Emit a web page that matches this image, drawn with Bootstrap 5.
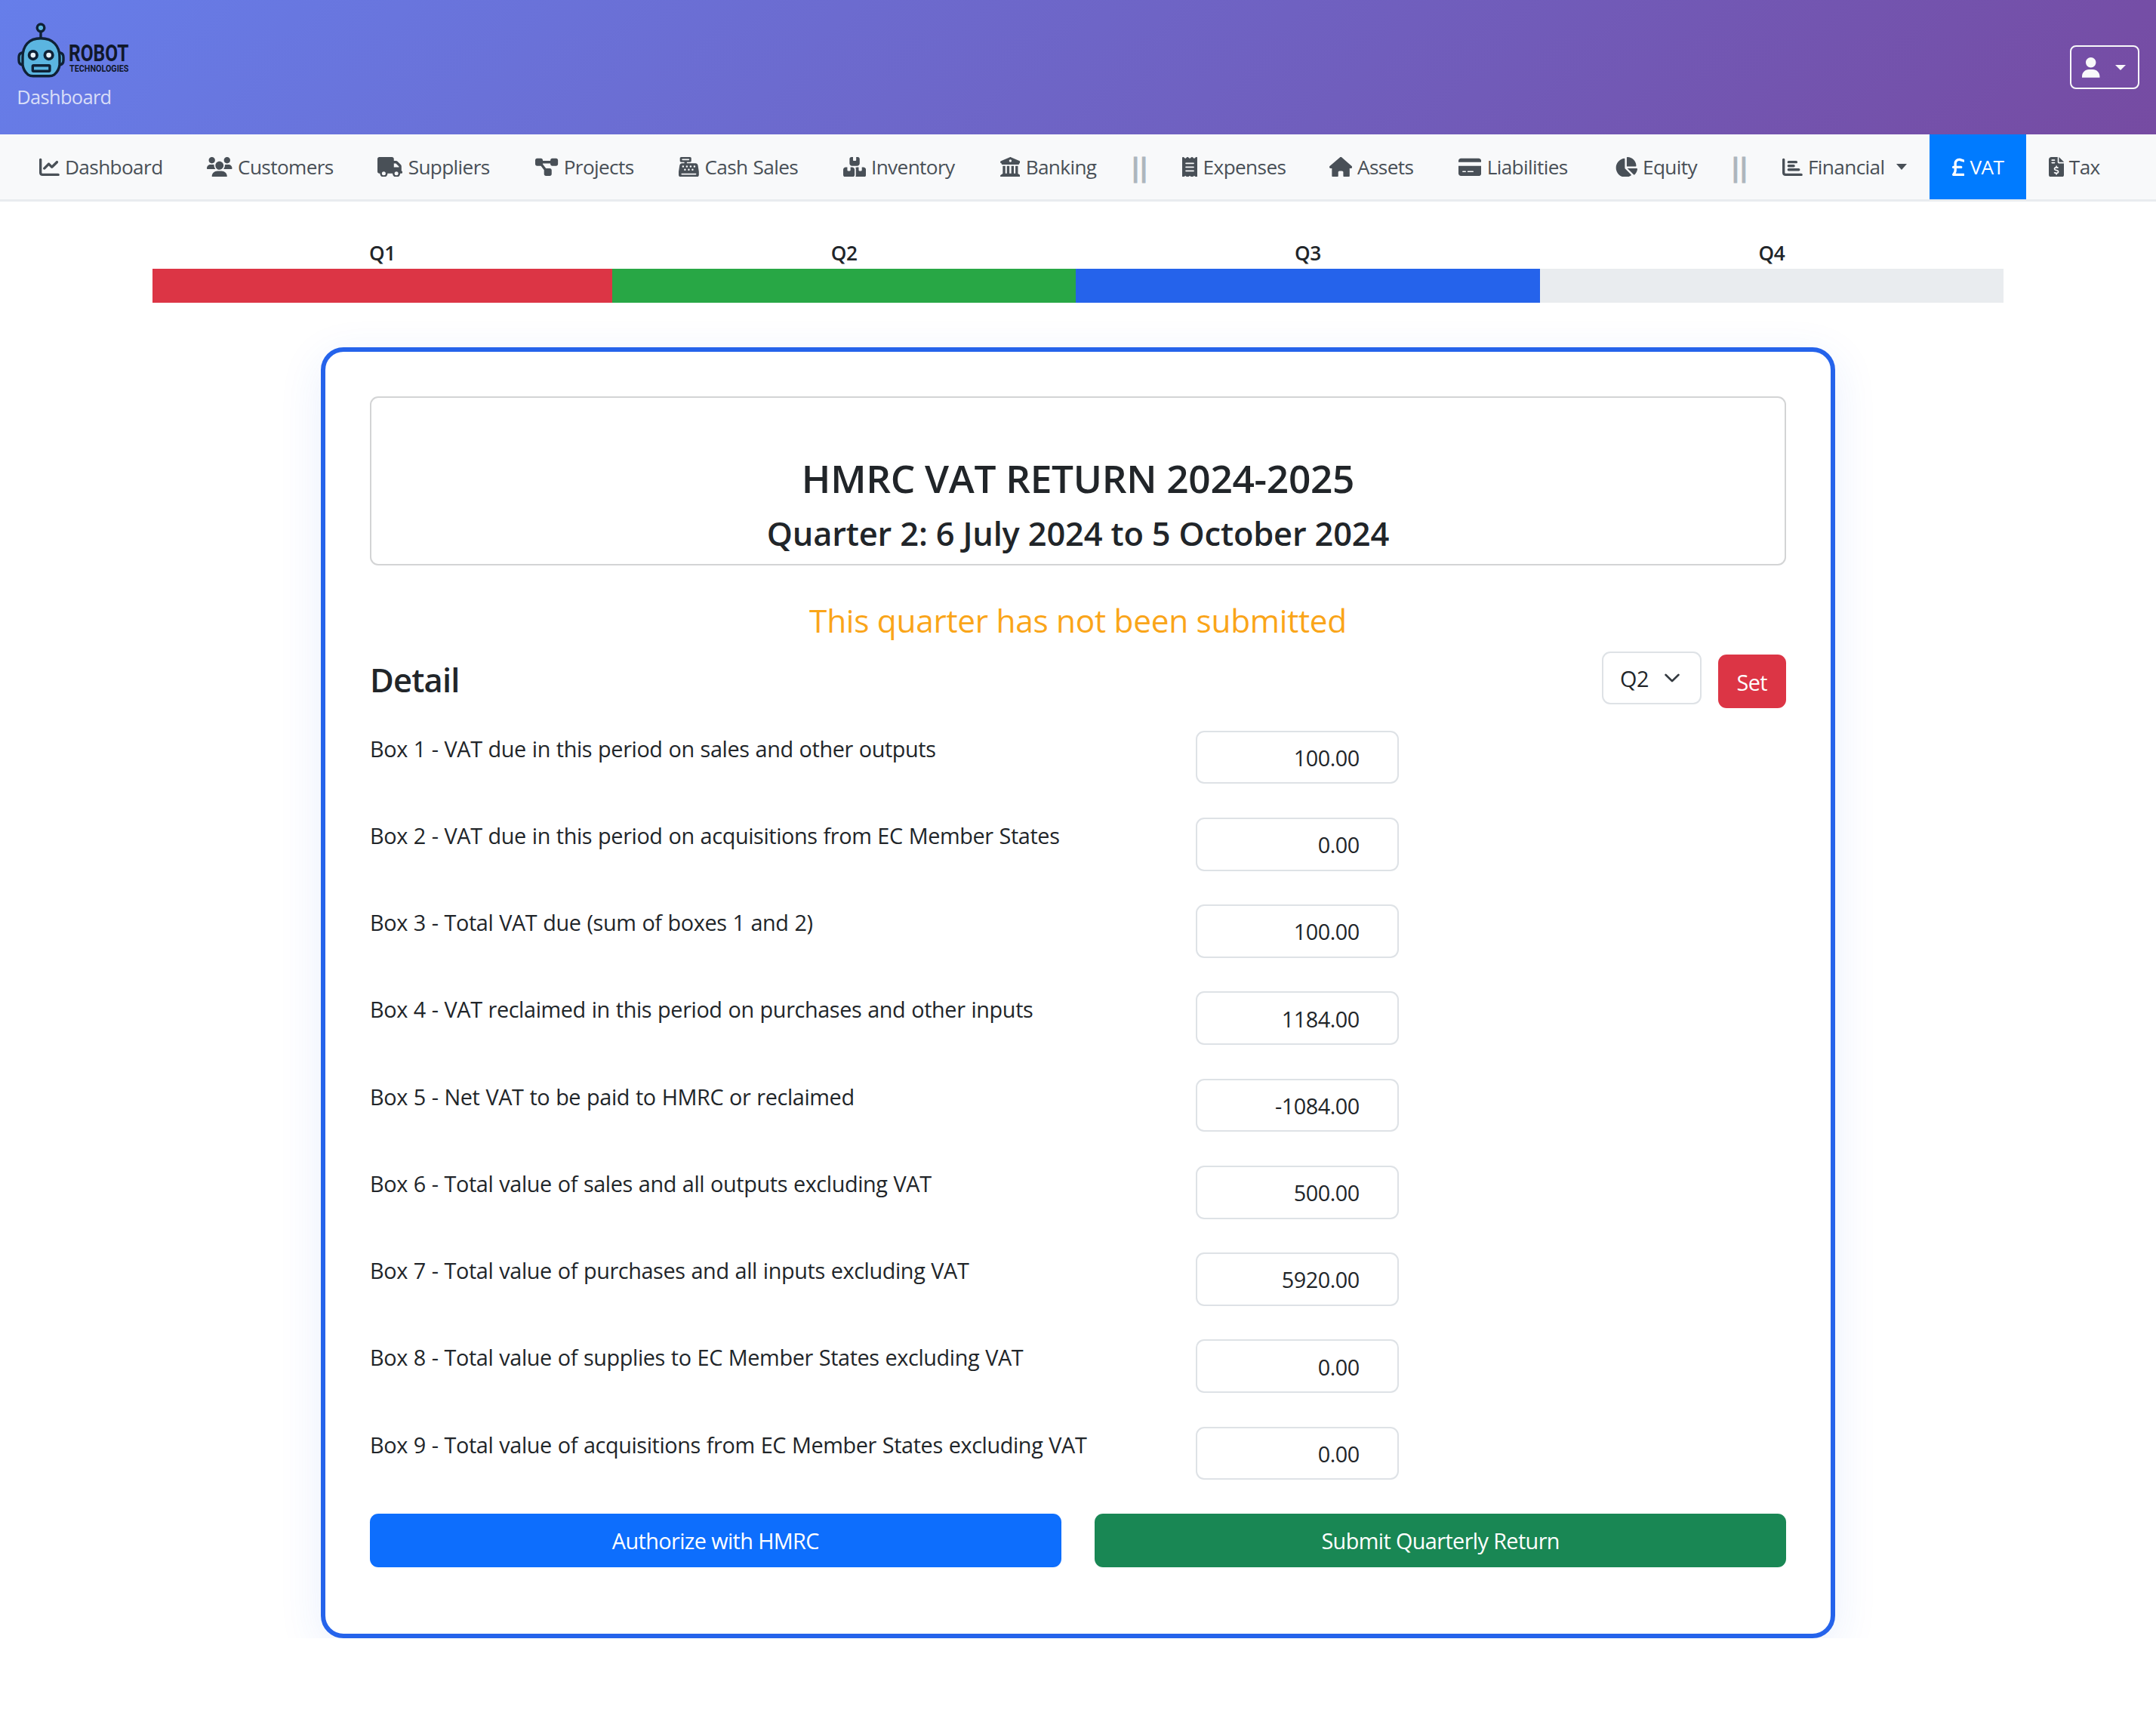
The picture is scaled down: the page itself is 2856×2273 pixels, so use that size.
<!DOCTYPE html>
<html lang="en">
<head>
<meta charset="utf-8">
<title>VAT Return - Robot Technologies</title>
<link rel="stylesheet" href="https://cdn.jsdelivr.net/npm/bootstrap@5.3.0/dist/css/bootstrap.min.css">
<style>
  html { font-size: 29.75px; }
  body { font-family: "Open Sans", "Noto Sans", sans-serif; font-size: 28.8px; letter-spacing: -.38px; word-spacing: .8px; line-height: 44.6px; background: #fff; color: #212529; }

  /* Header */
  .site-header { height: 178.4px; padding: 0 .75rem; background: linear-gradient(135deg, #667eea 0%, #764ba2 100%); }
  .brand-block { padding-bottom: 3px; }
  .brand-logo { display: block; width: 170px; height: 76px; margin-bottom: 5px; }
  .brand-page { font-size: 25.4px; letter-spacing: -.65px; line-height: 36px; color: rgba(255,255,255,.75); }
  .user-btn { width: 92px; height: 58px; padding: 0 16px 0 14.5px; border: 2px solid #f8f9fa; border-radius: 8px; color: #f8f9fa; }
  .user-btn::after { margin: 0; border-width: 7.5px 7.5px 0; }

  /* Navigation */
  .main-nav { height: 88.4px; padding: 0 22.3px; background: #f8f9fa; border-bottom: 3.7px solid #e9ecef; flex-wrap: nowrap; }
  .main-nav .nav-link { display: flex; align-items: center; flex: none; height: 100%; padding: 0 0 0 29.7px; color: #495057; font-size: 26.2px; letter-spacing: -.62px; line-height: 40px; border-radius: 0; white-space: nowrap; }
  .main-nav .nav-link.active { background: #007bff; color: #fff; }
  .main-nav .dropdown-toggle::after { margin-left: 15px; border-width: 8px 7.5px 0; }
  .ico { flex: none; height: 26.8px; margin-right: 7.2px; fill: currentColor; }
  .nav-split { flex: none; text-align: center; font-weight: 700; font-size: 34px; letter-spacing: -7.8px; text-indent: -8px; color: #adb5bd; -webkit-text-stroke: .9px #adb5bd; }
  .w-dash { width: 222.4px; } .w-cust { width: 225.6px; } .w-supp { width: 209.4px; } .w-proj { width: 190.1px; }
  .w-cash { width: 217.2px; } .w-inv { width: 208px; } .w-bank { width: 188px; } .w-split { width: 53.7px; }
  .w-exp { width: 194.4px; } .w-asset { width: 171.6px; } .w-liab { width: 206.4px; } .w-eq { width: 168.6px; }
  .w-fin { width: 224.6px; } .w-vat { width: 128px; } .w-tax { width: 130px; }

  /* Quarter timeline */
  .timeline { width: 2452px; margin: 47.5px auto 0; }
  .quarter-col { flex: 92 1 0; }
  .quarter-col:first-child { flex-grow: 91.2; }
  .quarter-name { padding-top: 1px; font-size: 26.2px; font-weight: 600; line-height: 40.7px; text-align: center; }
  .quarter-bar { height: 44.6px; }
  .bar-red { background: #dc3545; } .bar-green { background: #28a745; } .bar-blue { background: #2563eb; } .bar-none { background: #e9ecef; }

  /* VAT return card */
  .vat-card { width: 2006px; margin: 59.7px auto 0; padding: 59px 59px 88.6px; border: 6px solid #2563eb; border-radius: 30px; background: #fff; box-shadow: 0 15px 59px rgba(37,99,235,.1); }
  .title-box { height: 223.7px; padding-top: 75px; border: 2px solid #d3d4d5; border-radius: 11px; }
  .title-box h2 { margin: 0 0 15.6px; font-size: 51.4px; font-weight: 600; line-height: 62px; letter-spacing: -.3px; }
  .title-box h3, .detail-title { margin: 0; font-size: 43.4px; font-weight: 600; line-height: 53.5px; letter-spacing: -.17px; }
  .title-box h2, .title-box h3 { word-spacing: 0; }
  .vat-card .detail-title { padding-top: 1px; letter-spacing: -.8px; }
  .quarter-state { margin-top: 46.3px; font-size: 42.4px; line-height: 53.5px; letter-spacing: -.3px; word-spacing: 0; color: #faa519; }
  .detail-bar { margin: 13.9px 0 29.7px; height: 75.3px; }
  .quarter-select { width: 132.4px; height: 70.7px; border: 2px solid #dee2e6; padding: 1px 0 0 22.5px; font-size: 28.8px; letter-spacing: -.4px; line-height: 66px; background-size: 1rem .75rem; }
  .vat-row { height: 70.7px; margin-bottom: 44.57px; }
  .vat-row label { padding-top: 2px; }
  .vat-row .form-control { width: 268.4px; height: 70.7px; padding: 1px 50px 0 20px; border: 2px solid #dee2e6; font-size: 28.8px; letter-spacing: -.5px; text-align: right; }
  .vat-card .btn { height: 70.7px; padding: 0; border: 0; font-size: 28.8px; letter-spacing: -.6px; line-height: 72.4px; }
  .vat-card .set-btn { width: 90.5px; margin-left: 21.6px; line-height: 73px; }
</style>
</head>
<body>
<header class="site-header d-flex align-items-center justify-content-between">
  <div class="brand-block">
    <svg class="brand-logo" viewBox="22 29.2 170 76">
      <g fill="#5bb5e0" stroke="#0f2136" stroke-width="3.4" stroke-linejoin="round">
        <path d="M54 42v10" fill="none"/>
        <circle cx="54" cy="37" r="4.8"/>
        <path d="M31 70h-2q-4 1-4 6v4q0 5 4 6h3z"/>
        <path d="M78 70h2q4 1 4 6v4q0 5-4 6h-3z"/>
        <path d="M54 51C38 51 30 61 30 76v10q1 8 7 13 3 2 7 2h21q4 0 7-2 6-5 7-13V76C79 61 70 51 54 51z"/>
        <circle cx="43.8" cy="73.3" r="5.2" fill="#eaf3fb" stroke-width="3.8"/>
        <circle cx="64.6" cy="73.3" r="5.2" fill="#eaf3fb" stroke-width="3.8"/>
        <rect x="43.3" y="87" width="22.6" height="7.4" rx="1"/>
      </g>
      <g fill="#10182b" font-family="Roboto, sans-serif" font-weight="700" letter-spacing="0">
        <text x="91" y="81" font-size="32" textLength="79.5" lengthAdjust="spacingAndGlyphs">ROBOT</text>
        <text x="92" y="95.6" font-size="13.2" textLength="78.5" lengthAdjust="spacingAndGlyphs">TECHNOLOGIES</text>
      </g>
    </svg>
    <div class="brand-page">Dashboard</div>
  </div>
  <button class="user-btn bg-transparent dropdown-toggle d-flex align-items-center justify-content-between" type="button" aria-label="Account">
    <svg class="ico m-0" viewBox="0 0 448 512"><path d="M224 256c70.7 0 128-57.31 128-128s-57.3-128-128-128C153.3 0 96 57.31 96 128S153.3 256 224 256zM274.7 304H173.3C77.61 304 0 381.6 0 477.3V512H448V477.3C448 381.6 370.4 304 274.7 304z"/></svg>
  </button>
</header>

<nav class="main-nav nav align-items-center">
  <a class="nav-link w-dash" href="#"><svg class="ico" viewBox="0 0 512 512"><path d="M64 64c0-17.7-14.3-32-32-32S0 46.3 0 64V400c0 44.2 35.8 80 80 80H480c17.7 0 32-14.3 32-32s-14.3-32-32-32H80c-8.8 0-16-7.2-16-16V64zm406.6 86.6c12.5-12.5 12.5-32.8 0-45.3s-32.8-12.5-45.3 0L320 210.7l-57.4-57.4c-12.5-12.5-32.8-12.5-45.3 0l-112 112c-12.5 12.5-12.5 32.8 0 45.3s32.8 12.5 45.3 0L240 221.3l57.4 57.4c12.5 12.5 32.8 12.5 45.3 0l128-128z"/></svg>Dashboard</a>
  <a class="nav-link w-cust" href="#"><svg class="ico" viewBox="0 0 640 512"><path d="M319.9 320c57.41 0 103.1-46.56 103.1-104c0-57.44-46.54-104-103.1-104c-57.41 0-103.1 46.56-103.1 104C215.9 273.4 262.5 320 319.9 320zM369.9 352H270.1C191.6 352 128 411.7 128 485.3C128 500.1 140.7 512 156.4 512h327.2C499.3 512 512 500.1 512 485.3C512 411.7 448.4 352 369.9 352zM512 160c44.18 0 80-35.82 80-80S556.2 0 512 0c-44.18 0-80 35.82-80 80S467.8 160 512 160zM183.9 216c0-5.449 .9824-10.63 1.609-15.91C174.6 194.1 162.6 192 149.9 192H88.08C39.44 192 0 233.8 0 285.3C0 295.6 7.887 304 17.62 304h199.5C196.7 280.2 183.9 249.7 183.9 216zM128 160c44.18 0 80-35.82 80-80S172.2 0 128 0C83.82 0 48 35.82 48 80S83.82 160 128 160zM551.9 192h-61.84c-12.8 0-24.88 3.037-35.86 8.24C454.8 205.5 455.8 210.6 455.8 216c0 33.71-12.78 64.21-33.16 88h199.7C632.1 304 640 295.6 640 285.3C640 233.8 600.6 192 551.9 192z"/></svg>Customers</a>
  <a class="nav-link w-supp" href="#"><svg class="ico" viewBox="0 0 640 512"><path d="M48 0C21.5 0 0 21.5 0 48V368c0 26.5 21.5 48 48 48H64c0 53 43 96 96 96s96-43 96-96H384c0 53 43 96 96 96s96-43 96-96h32c17.7 0 32-14.3 32-32s-14.3-32-32-32V288 256 237.3c0-17-6.7-33.3-18.7-45.3L512 114.7c-12-12-28.3-18.7-45.3-18.7H416V48c0-26.5-21.5-48-48-48H48zM416 160h50.7L544 237.3V256H416V160zM112 416a48 48 0 1 1 96 0 48 48 0 1 1 -96 0zm368-48a48 48 0 1 1 0 96 48 48 0 1 1 0-96z"/></svg>Suppliers</a>
  <a class="nav-link w-proj" href="#"><svg class="ico" viewBox="0 0 576 512"><path d="M0 80C0 53.5 21.5 32 48 32h96c26.5 0 48 21.5 48 48V96H384V80c0-26.5 21.5-48 48-48h96c26.5 0 48 21.5 48 48v96c0 26.5-21.5 48-48 48H432c-26.5 0-48-21.5-48-48V160H192v16c0 1.7-.1 3.4-.3 5L272 288h96c26.5 0 48 21.5 48 48v96c0 26.5-21.5 48-48 48H272c-26.5 0-48-21.5-48-48V336c0-1.7 .1-3.4 .3-5L144 224H48c-26.5 0-48-21.5-48-48V80z"/></svg>Projects</a>
  <a class="nav-link w-cash" href="#"><svg class="ico" viewBox="0 0 512 512"><path d="M64 0C46.3 0 32 14.3 32 32V96c0 17.7 14.3 32 32 32h80v32H87c-31.6 0-58.5 23.1-63.3 54.4L1.1 364.1C.4 368.8 0 373.6 0 378.4V448c0 35.3 28.7 64 64 64H448c35.3 0 64-28.7 64-64V378.4c0-4.8-.4-9.6-1.1-14.4L488.2 214.4C483.5 183.1 456.6 160 425 160H208V128h80c17.7 0 32-14.3 32-32V32c0-17.7-14.3-32-32-32H64zM96 48H256c8.8 0 16 7.2 16 16s-7.2 16-16 16H96c-8.8 0-16-7.2-16-16s7.2-16 16-16zM64 432c0-8.8 7.2-16 16-16H432c8.8 0 16 7.2 16 16s-7.2 16-16 16H80c-8.8 0-16-7.2-16-16zm48-168a24 24 0 1 1 0-48 24 24 0 1 1 0 48zm120-24a24 24 0 1 1 -48 0 24 24 0 1 1 48 0zM160 344a24 24 0 1 1 0-48 24 24 0 1 1 0 48zM328 240a24 24 0 1 1 -48 0 24 24 0 1 1 48 0zM256 344a24 24 0 1 1 0-48 24 24 0 1 1 0 48zM424 240a24 24 0 1 1 -48 0 24 24 0 1 1 48 0zM352 344a24 24 0 1 1 0-48 24 24 0 1 1 0 48z"/></svg>Cash Sales</a>
  <a class="nav-link w-inv" href="#"><svg class="ico" viewBox="0 0 576 512"><path d="M248 0H208c-26.5 0-48 21.5-48 48V160c0 35.3 28.7 64 64 64H352c35.3 0 64-28.7 64-64V48c0-26.5-21.5-48-48-48H328V80c0 8.8-7.2 16-16 16H264c-8.8 0-16-7.2-16-16V0zM64 256c-35.3 0-64 28.7-64 64V448c0 35.3 28.7 64 64 64H224c35.3 0 64-28.7 64-64V320c0-35.3-28.7-64-64-64H184v80c0 8.8-7.2 16-16 16H120c-8.8 0-16-7.2-16-16V256H64zM352 512H512c35.3 0 64-28.7 64-64V320c0-35.3-28.7-64-64-64H472v80c0 8.8-7.2 16-16 16H408c-8.8 0-16-7.2-16-16V256H352c-15 0-28.8 5.1-39.7 13.8c4.9 10.4 7.7 22 7.7 34.2V464c0 12.2-2.8 23.8-7.7 34.2C323.2 506.9 337 512 352 512z"/></svg>Inventory</a>
  <a class="nav-link w-bank" href="#"><svg class="ico" viewBox="0 0 512 512"><path d="M243.4 2.6l-224 96c-14 6-21.8 21-18.7 35.8S16.8 160 32 160v8c0 13.3 10.7 24 24 24H456c13.3 0 24-10.7 24-24v-8c15.2 0 28.3-10.7 31.3-25.6s-4.8-29.9-18.7-35.8l-224-96c-8-3.4-17.2-3.4-25.2 0zM128 224H64V420.3c-.6 .3-1.2 .7-1.8 1.1l-48 32c-11.7 7.8-17 22.4-12.9 35.9S17.9 512 32 512H480c14.1 0 26.5-9.2 30.6-22.7s-1.1-28.1-12.9-35.9l-48-32c-.6-.4-1.2-.7-1.8-1.1V224H384V416H344V224H280V416H232V224H168V416H128V224zM256 64a32 32 0 1 1 0 64 32 32 0 1 1 0-64z"/></svg>Banking</a>
  <span class="nav-split w-split">||</span>
  <a class="nav-link w-exp" href="#"><svg class="ico" viewBox="0 0 384 512"><path d="M14 2.2C22.5-1.7 32.5-.3 39.6 5.8L80 40.4 120.4 5.8c9-7.7 22.3-7.7 31.2 0L192 40.4 232.4 5.8c9-7.7 22.3-7.7 31.2 0L304 40.4 344.4 5.8c7.1-6.1 17.1-7.5 25.6-3.6s14 12.4 14 21.8V488c0 9.4-5.5 17.9-14 21.8s-18.5 2.5-25.6-3.6L304 471.6l-40.4 34.6c-9 7.7-22.3 7.7-31.2 0L192 471.6l-40.4 34.6c-9 7.7-22.3 7.7-31.2 0L80 471.6 39.6 506.2c-7.1 6.1-17.1 7.5-25.6 3.6S0 497.4 0 488V24C0 14.6 5.5 6.1 14 2.2zM96 144c-8.8 0-16 7.2-16 16s7.2 16 16 16H288c8.8 0 16-7.2 16-16s-7.2-16-16-16H96zM80 352c0 8.8 7.2 16 16 16H288c8.8 0 16-7.2 16-16s-7.2-16-16-16H96c-8.8 0-16 7.2-16 16zM96 240c-8.8 0-16 7.2-16 16s7.2 16 16 16H288c8.8 0 16-7.2 16-16s-7.2-16-16-16H96z"/></svg>Expenses</a>
  <a class="nav-link w-asset" href="#"><svg class="ico" viewBox="0 0 576 512"><path d="M575.8 255.5c0 18-15 32.1-32 32.1h-32l.7 160.2c0 2.7-.2 5.4-.5 8.1V472c0 22.1-17.9 40-40 40H456c-1.1 0-2.2 0-3.3-.1c-1.4 .1-2.8 .1-4.2 .1H416 392c-22.1 0-40-17.9-40-40V448 384c0-17.7-14.3-32-32-32H256c-17.7 0-32 14.3-32 32v64 24c0 22.1-17.9 40-40 40H160 128.1c-1.5 0-3-.1-4.5-.2c-1.2 .1-2.4 .2-3.6 .2H104c-22.1 0-40-17.9-40-40V360c0-.9 0-1.9 .1-2.8V287.6H32c-18 0-32-14-32-32.1c0-9 3-17 10-24L266.4 8c7-7 15-8 22-8s15 2 21 7L564.8 231.5c8 7 12 15 11 24z"/></svg>Assets</a>
  <a class="nav-link w-liab" href="#"><svg class="ico" viewBox="0 0 576 512"><path d="M64 32C28.7 32 0 60.7 0 96v32H576V96c0-35.3-28.7-64-64-64H64zM576 224H0V416c0 35.3 28.7 64 64 64H512c35.3 0 64-28.7 64-64V224zM112 352h64c8.8 0 16 7.2 16 16s-7.2 16-16 16H112c-8.8 0-16-7.2-16-16s7.2-16 16-16zm112 16c0-8.8 7.2-16 16-16H368c8.8 0 16 7.2 16 16s-7.2 16-16 16H240c-8.8 0-16-7.2-16-16z"/></svg>Liabilities</a>
  <a class="nav-link w-eq" href="#"><svg class="ico" viewBox="0 0 576 512"><path d="M304 240V16.6c0-9 7-16.6 16-16.6C443.7 0 544 100.3 544 224c0 9-7.6 16-16.6 16H304zM32 272C32 150.7 122.1 50.3 239 34.3c9.2-1.3 17 6.1 17 15.4V288L412.5 444.5c6.7 6.7 6.2 17.7-1.5 23.1C371.8 495.6 323.8 512 272 512C139.5 512 32 404.6 32 272zm526.4 16c9.3 0 16.6 7.8 15.4 17c-7.7 55.9-34.6 105.6-73.9 142.3c-6 5.6-15.4 5.2-21.2-.7L320 288H558.4z"/></svg>Equity</a>
  <span class="nav-split w-split">||</span>
  <a class="nav-link dropdown-toggle w-fin" href="#"><svg class="ico" viewBox="0 0 512 512"><path d="M32 32c17.7 0 32 14.3 32 32V400c0 8.8 7.2 16 16 16H480c17.7 0 32 14.3 32 32s-14.3 32-32 32H80c-44.2 0-80-35.8-80-80V64C0 46.3 14.3 32 32 32zm96 96c0-17.7 14.3-32 32-32l192 0c17.7 0 32 14.3 32 32s-14.3 32-32 32H160c-17.7 0-32-14.3-32-32zm32 64H288c17.7 0 32 14.3 32 32s-14.3 32-32 32H160c-17.7 0-32-14.3-32-32s14.3-32 32-32zm0 96H416c17.7 0 32 14.3 32 32s-14.3 32-32 32H160c-17.7 0-32-14.3-32-32s14.3-32 32-32z"/></svg>Financial</a>
  <a class="nav-link active w-vat" href="#"><svg class="ico" viewBox="0 0 320 512"><path d="M112 160.4c0-35.5 28.8-64.4 64.4-64.4c6.9 0 13.8 1.1 20.4 3.3l81.2 27.1c16.8 5.6 34.9-3.5 40.5-20.2s-3.5-34.9-20.2-40.5L217 38.6c-13.1-4.4-26.8-6.6-40.6-6.6C105.5 32 48 89.5 48 160.4V224H32c-17.7 0-32 14.3-32 32s14.3 32 32 32H48v44.5c0 17.4-4.7 34.5-13.7 49.4L4.6 431.5c-5.9 9.9-6.1 22.2-.4 32.2S20.5 480 32 480H288c17.7 0 32-14.3 32-32s-14.3-32-32-32H88.5l.7-1.1C104.1 390 112 361.5 112 332.5V288H224c17.7 0 32-14.3 32-32s-14.3-32-32-32H112V160.4z"/></svg>VAT</a>
  <a class="nav-link w-tax" href="#"><svg class="ico" viewBox="0 0 384 512"><path d="M64 0C28.7 0 0 28.7 0 64V448c0 35.3 28.7 64 64 64H320c35.3 0 64-28.7 64-64V160H256c-17.7 0-32-14.3-32-32V0H64zM256 0V128H384L256 0zM64 80c0-8.8 7.2-16 16-16h64c8.8 0 16 7.2 16 16s-7.2 16-16 16H80c-8.8 0-16-7.2-16-16zm0 64c0-8.8 7.2-16 16-16h64c8.8 0 16 7.2 16 16s-7.2 16-16 16H80c-8.8 0-16-7.2-16-16zm128 72c8.8 0 16 7.2 16 16v17.3c8.5 1.2 16.7 3.1 24.1 5.1c8.5 2.3 13.6 11 11.3 19.6s-11 13.6-19.6 11.3c-11.1-3-22-5.2-32.1-5.3c-8.4-.1-17.4 1.8-23.6 5.5c-5.7 3.4-8.1 7.3-8.1 12.8c0 3.7 1.3 6.5 7.3 10.1c6.9 4.1 16.6 7.1 29.2 10.9l.5 .1c11.3 3.4 25.3 7.6 36.3 14.6c12.1 7.6 22.4 19.7 22.7 38.2c.3 19.3-9.6 33.3-22.9 41.6c-7.7 4.8-16.4 7.6-25.1 9.1V440c0 8.8-7.2 16-16 16s-16-7.2-16-16V422.2c-11.2-2.1-21.7-5.7-30.9-8.9c-2.1-.7-4.2-1.4-6.2-2.1c-8.4-2.8-12.9-11.9-10.1-20.2s11.9-12.9 20.2-10.1c2.5 .8 4.8 1.6 7.1 2.4c13.6 4.6 24.6 8.4 36.3 8.7c9.1 .3 17.9-1.7 23.7-5.3c5.1-3.2 7.9-7.3 7.8-14c-.1-4.6-1.8-7.8-7.7-11.6c-6.8-4.3-16.5-7.4-29-11.2l-1.6-.5c-11-3.3-24.3-7.3-34.8-13.7c-12-7.2-22.6-18.9-22.7-37.3c-.1-19.4 10.8-32.8 23.8-40.5c7.5-4.4 15.8-7.2 24.1-8.7V232c0-8.8 7.2-16 16-16z"/></svg>Tax</a>
</nav>

<main>
  <section class="timeline d-flex">
    <div class="quarter-col"><div class="quarter-name">Q1</div><div class="quarter-bar bar-red"></div></div>
    <div class="quarter-col"><div class="quarter-name">Q2</div><div class="quarter-bar bar-green"></div></div>
    <div class="quarter-col"><div class="quarter-name">Q3</div><div class="quarter-bar bar-blue"></div></div>
    <div class="quarter-col"><div class="quarter-name">Q4</div><div class="quarter-bar bar-none"></div></div>
  </section>

  <section class="vat-card">
    <div class="title-box text-center">
      <h2>HMRC VAT RETURN 2024-2025</h2>
      <h3>Quarter 2: 6 July 2024 to 5 October 2024</h3>
    </div>
    <div class="quarter-state text-center">This quarter has not been submitted</div>

    <div class="detail-bar d-flex align-items-start">
      <h3 class="detail-title me-auto align-self-center">Detail</h3>
      <select class="form-select quarter-select" aria-label="Quarter"><option>Q2</option></select>
      <button class="btn btn-danger set-btn align-self-end" type="button">Set</button>
    </div>

    <div class="row g-0 vat-row"><label class="col-7">Box 1 - VAT due in this period on sales and other outputs</label><input class="form-control" value="100.00"></div>
    <div class="row g-0 vat-row"><label class="col-7">Box 2 - VAT due in this period on acquisitions from EC Member States</label><input class="form-control" value="0.00"></div>
    <div class="row g-0 vat-row"><label class="col-7">Box 3 - Total VAT due (sum of boxes 1 and 2)</label><input class="form-control" value="100.00"></div>
    <div class="row g-0 vat-row"><label class="col-7">Box 4 - VAT reclaimed in this period on purchases and other inputs</label><input class="form-control" value="1184.00"></div>
    <div class="row g-0 vat-row"><label class="col-7">Box 5 - Net VAT to be paid to HMRC or reclaimed</label><input class="form-control" value="-1084.00"></div>
    <div class="row g-0 vat-row"><label class="col-7">Box 6 - Total value of sales and all outputs excluding VAT</label><input class="form-control" value="500.00"></div>
    <div class="row g-0 vat-row"><label class="col-7">Box 7 - Total value of purchases and all inputs excluding VAT</label><input class="form-control" value="5920.00"></div>
    <div class="row g-0 vat-row"><label class="col-7">Box 8 - Total value of supplies to EC Member States excluding VAT</label><input class="form-control" value="0.00"></div>
    <div class="row g-0 vat-row"><label class="col-7">Box 9 - Total value of acquisitions from EC Member States excluding VAT</label><input class="form-control" value="0.00"></div>

    <div class="row gx-4">
      <div class="col-6"><button class="btn btn-primary w-100" type="button">Authorize with HMRC</button></div>
      <div class="col-6"><button class="btn btn-success w-100" type="button">Submit Quarterly Return</button></div>
    </div>
  </section>
</main>
<script src="https://cdn.jsdelivr.net/npm/bootstrap@5.3.0/dist/js/bootstrap.bundle.min.js"></script>
</body>
</html>
